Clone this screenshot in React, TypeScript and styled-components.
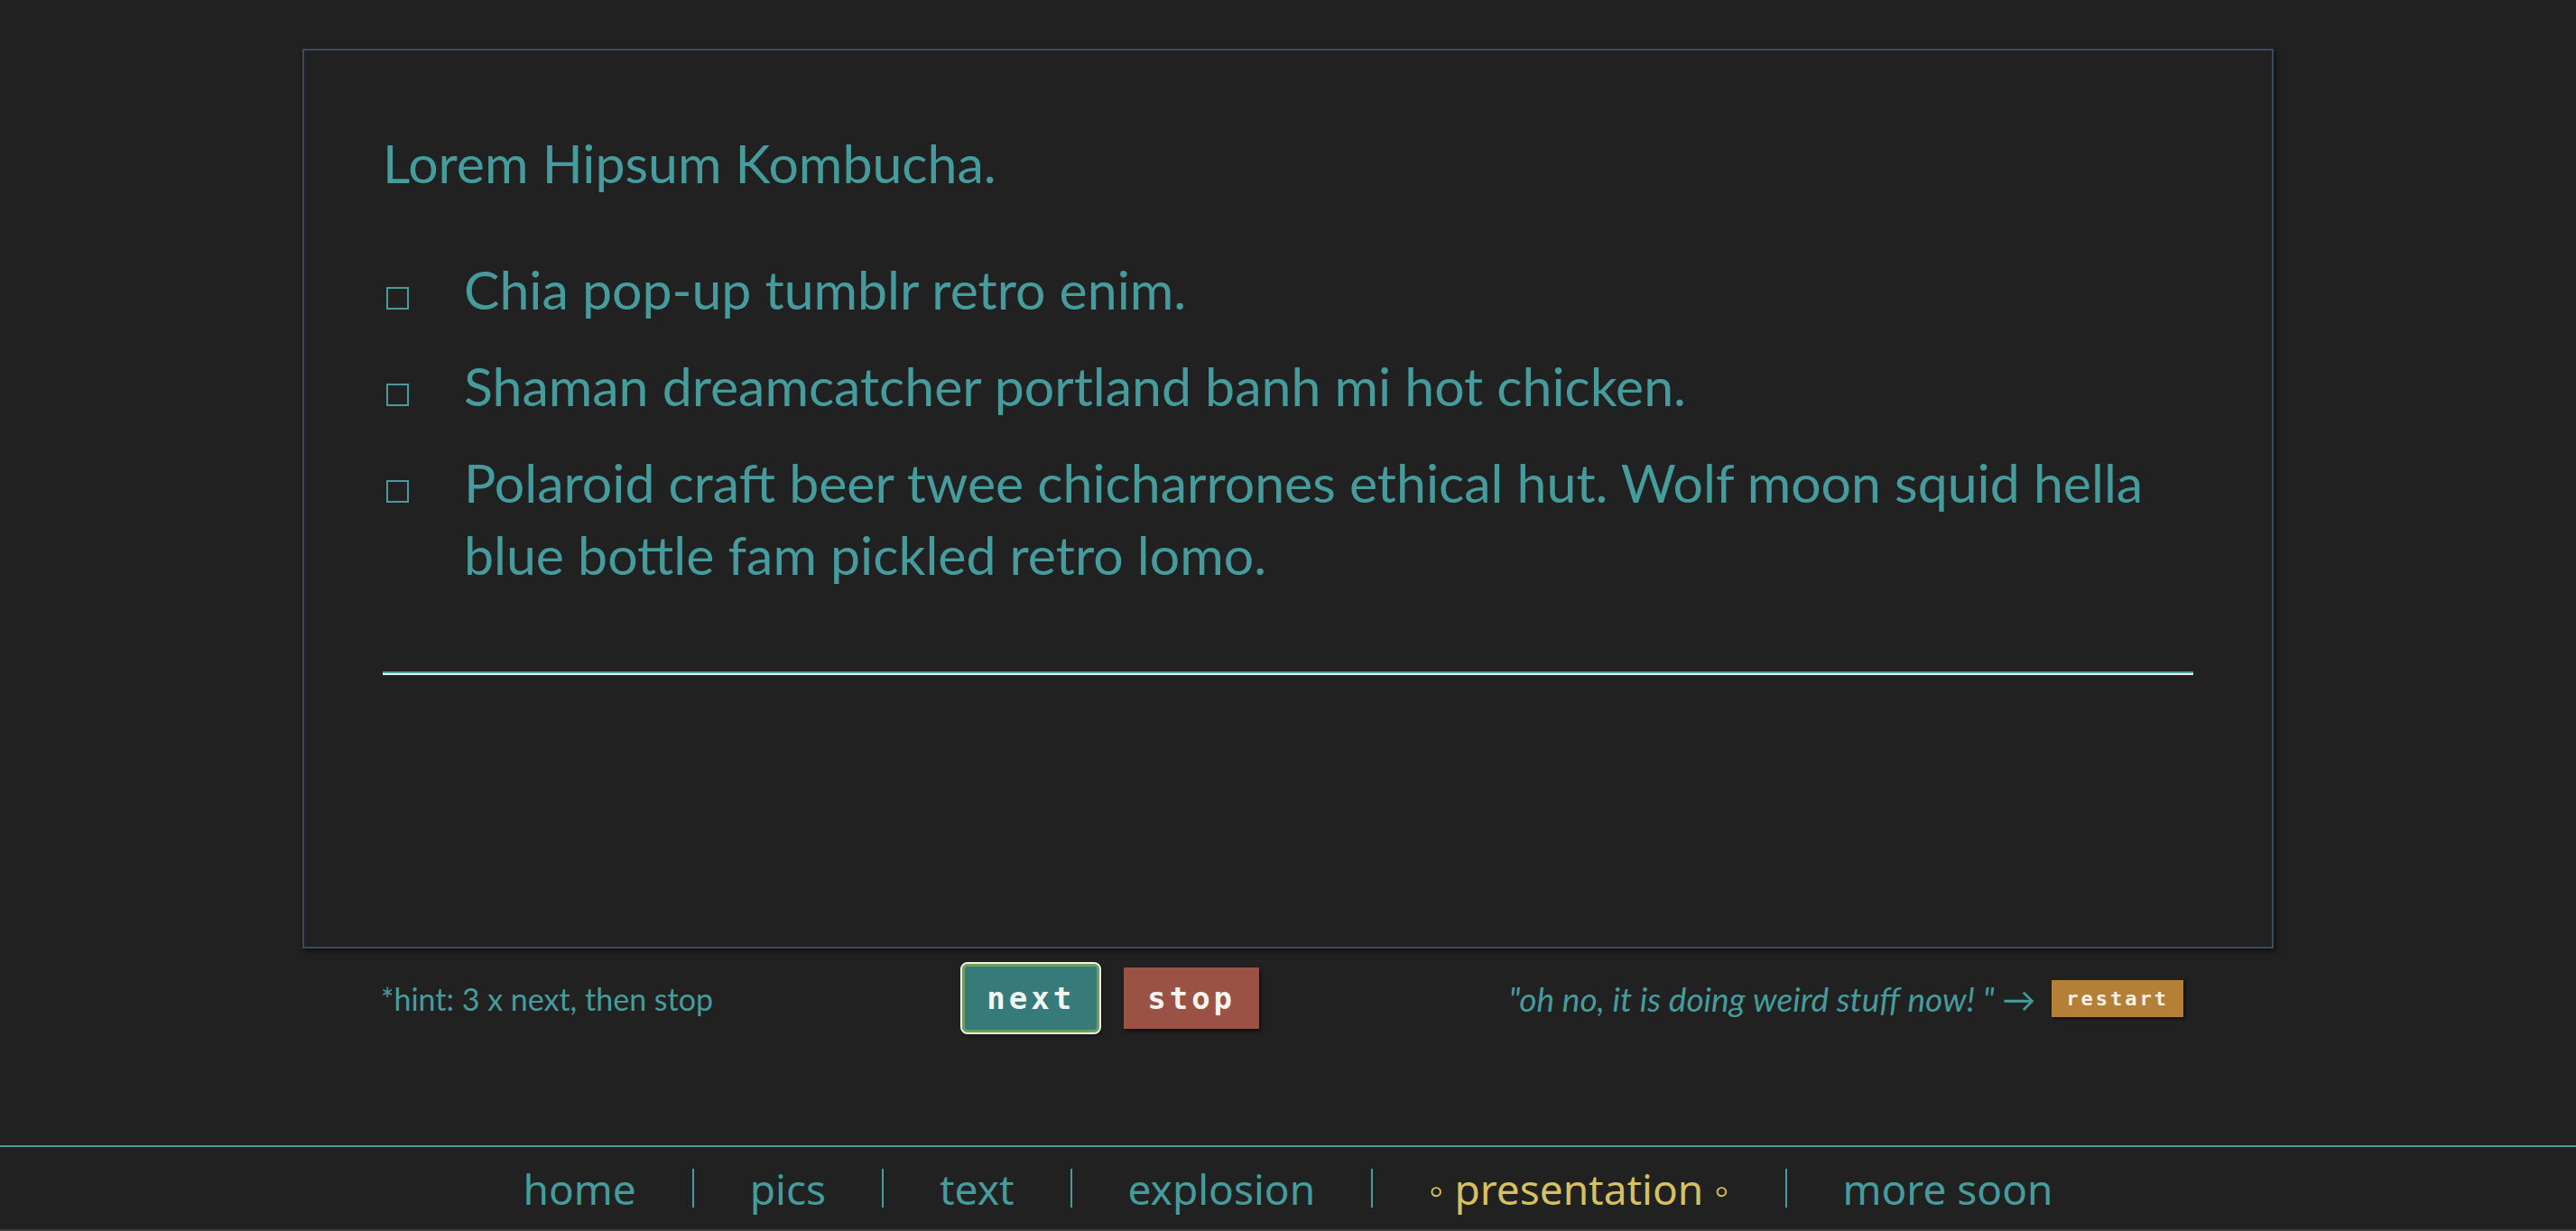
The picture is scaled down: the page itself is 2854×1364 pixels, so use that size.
import React from 'react'
import styled, { createGlobalStyle } from 'styled-components'

const teal = '#469c9d'

const GlobalStyle = createGlobalStyle`
  html, body {
    margin: 0;
    padding: 0;
    background-color: #212121;
  }
  body {
    font-family: Lato, "Noto Sans", sans-serif;
    color: ${teal};
  }
`

const Page = styled.div`
  height: 100vh;
  display: flex;
  flex-direction: column;
`

const Main = styled.main`
  flex: 1;
  padding-top: 54px;
`

const Frame = styled.section`
  box-sizing: border-box;
  width: 2184px;
  height: 997px;
  margin: 0 auto;
  padding: 84px 87px 0;
  border: 2px solid #3b4b5c;
  box-shadow: 2px 3px 5px rgba(0, 0, 0, 0.55);
`

const Title = styled.p`
  margin: 0 0 60px;
  font-size: 59px;
  line-height: 81px;
`

const List = styled.ul`
  list-style: none;
  margin: 0;
  padding: 0;
`

const Item = styled.li`
  display: flex;
  align-items: baseline;
  margin-bottom: 27px;
  padding-left: 4px;
  font-size: 59px;
  line-height: 80px;
`

const Check = styled.span`
  flex: none;
  display: inline-block;
  box-sizing: border-box;
  width: 25px;
  height: 25px;
  margin-right: 61px;
  border: 2px solid ${teal};
`

const Rule = styled.div`
  margin-top: 89px;
  border-top: 2px solid #4fa3a3;
  border-bottom: 2px solid #e6efee;
`

const Controls = styled.div`
  box-sizing: border-box;
  width: 2184px;
  margin: 17px auto 0;
  padding: 0 100px 0 87px;
  display: flex;
  align-items: center;
  justify-content: space-between;
`

const Hint = styled.span`
  font-size: 34px;
`

const Buttons = styled.div`
  display: flex;
  align-items: center;
  gap: 27px;
`

const Button = styled.button<{ $bg: string; $active?: boolean }>`
  box-sizing: border-box;
  height: ${({ $active }) => ($active ? '76px' : '68px')};
  padding: 0 ${({ $active }) => ($active ? '24px' : '26px')};
  background-color: ${({ $bg }) => $bg};
  color: #f4f4f0;
  border: ${({ $active }) => ($active ? '3px solid #6da05a' : 'none')};
  outline: ${({ $active }) => ($active ? '2px solid #f2f4ea' : 'none')};
  border-radius: ${({ $active }) => ($active ? '6px' : '0')};
  box-shadow: 2px 3px 4px rgba(0, 0, 0, 0.5);
  font-family: "DejaVu Sans Mono", monospace;
  font-weight: bold;
  font-size: 34px;
  letter-spacing: 4px;
`

const Quote = styled.span`
  display: flex;
  align-items: center;
  gap: 18px;
  font-size: 37px;
  font-style: italic;
`

const Restart = styled.button`
  height: 41px;
  padding: 0 16px;
  background-color: #b47f37;
  color: #f6f1e6;
  border: none;
  box-shadow: 2px 2px 3px rgba(0, 0, 0, 0.5);
  font-family: "DejaVu Sans Mono", monospace;
  font-weight: bold;
  font-size: 22px;
  letter-spacing: 3px;
`

const Footer = styled.nav`
  height: 91px;
  border-top: 2px solid ${teal};
  border-bottom: 2px solid #3c3c3c;
  display: flex;
  align-items: center;
  justify-content: center;
`

const NavLink = styled.a<{ $current?: boolean }>`
  padding: 0 62px;
  color: ${({ $current }) => ($current ? '#d6c062' : teal)};
  font-family: "Noto Sans", sans-serif;
  font-size: 46px;
  text-decoration: none;
`

const Divider = styled.span`
  width: 2px;
  height: 43px;
  background-color: ${teal};
`

const items = [
  'Chia pop-up tumblr retro enim.',
  'Shaman dreamcatcher portland banh mi hot chicken.',
  'Polaroid craft beer twee chicharrones ethical hut. Wolf moon squid hella blue bottle fam pickled retro lomo.',
]

const links = ['home', 'pics', 'text', 'explosion', 'presentation', 'more soon']

export default function App() {
  return (
    <Page>
      <GlobalStyle />
      <Main>
        <Frame>
          <Title>Lorem Hipsum Kombucha.</Title>
          <List>
            {items.map((text) => (
              <Item key={text}>
                <Check />
                <span>{text}</span>
              </Item>
            ))}
          </List>
          <Rule />
        </Frame>
        <Controls>
          <Hint>*hint: 3 x next, then stop</Hint>
          <Buttons>
            <Button $bg="#367a7a" $active>next</Button>
            <Button $bg="#9a5245">stop</Button>
          </Buttons>
          <Quote>
            "oh no, it is doing weird stuff now! " →
            <Restart>restart</Restart>
          </Quote>
        </Controls>
      </Main>
      <Footer>
        {links.map((link, i) => (
          <React.Fragment key={link}>
            {i > 0 && <Divider />}
            <NavLink href="#" $current={link === 'presentation'}>
              {link === 'presentation' ? '◦ presentation ◦' : link}
            </NavLink>
          </React.Fragment>
        ))}
      </Footer>
    </Page>
  )
}
